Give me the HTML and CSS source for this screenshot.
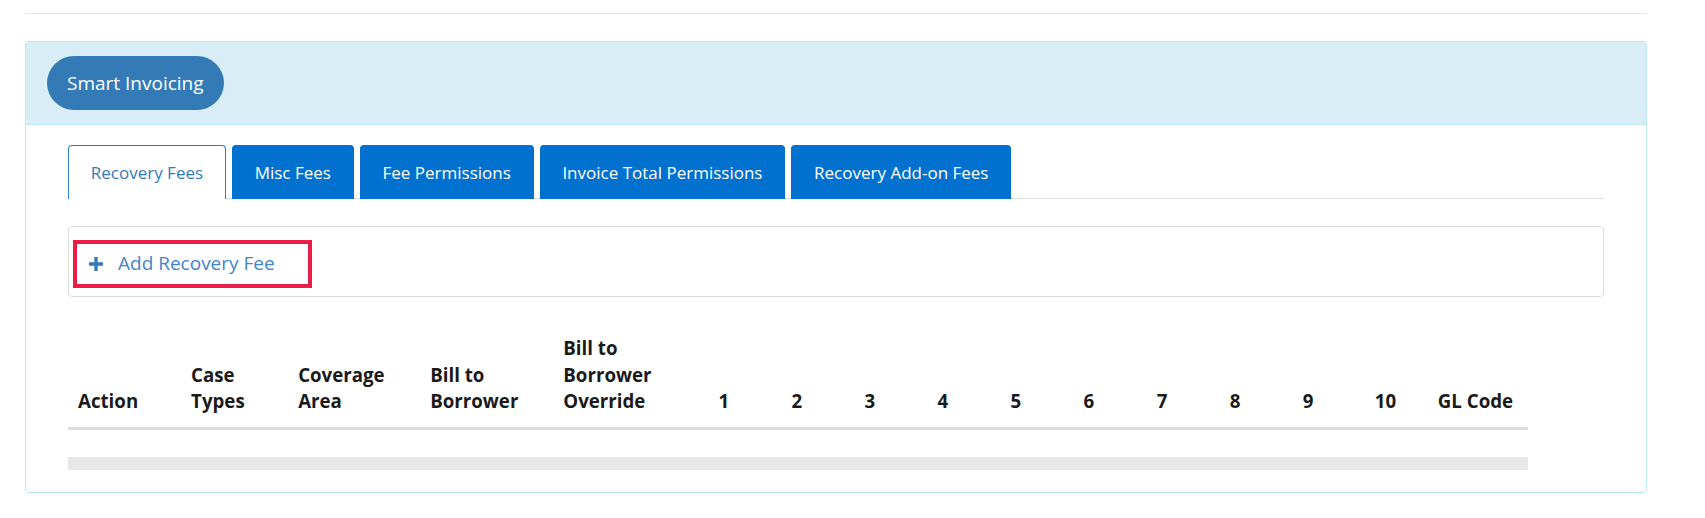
FILE: index.html
```html
<!DOCTYPE html>
<html lang="en">
<head>
<meta charset="utf-8">
<title>Smart Invoicing</title>
<link rel="stylesheet" href="styles.css">
</head>
<body>
<div class="page">
  <hr class="top-rule">
  <section class="panel">
    <div class="panel-heading">
      <button class="pill" type="button">Smart Invoicing</button>
    </div>
    <div class="panel-body">
      <ul class="tabs">
        <li class="tab active">Recovery Fees</li>
        <li class="tab">Misc Fees</li>
        <li class="tab">Fee Permissions</li>
        <li class="tab">Invoice Total Permissions</li>
        <li class="tab">Recovery Add-on Fees</li>
      </ul>
      <div class="well">
        <a class="add-link" href="#">
          <svg class="plus" viewBox="0 0 14 14" width="14" height="14" aria-hidden="true"><path d="M5.3 0h3.4v5.3H14v3.4H8.7V14H5.3V8.7H0V5.3h5.3z" fill="#337ab7"/></svg>
          <span>Add Recovery Fee</span>
        </a>
      </div>
      <table class="fees">
        <colgroup>
          <col class="c-action"><col class="c-case"><col class="c-cov"><col class="c-bill"><col class="c-over">
          <col class="c-num"><col class="c-num"><col class="c-num"><col class="c-num"><col class="c-num">
          <col class="c-num"><col class="c-num"><col class="c-num"><col class="c-num9"><col class="c-num10"><col class="c-gl">
        </colgroup>
        <thead>
          <tr>
            <th>Action</th>
            <th>Case<br>Types</th>
            <th>Coverage<br>Area</th>
            <th>Bill to<br>Borrower</th>
            <th>Bill to<br>Borrower<br>Override</th>
            <th>1</th><th>2</th><th>3</th><th>4</th><th>5</th>
            <th>6</th><th>7</th><th>8</th><th>9</th><th>10</th>
            <th>GL Code</th>
          </tr>
        </thead>
        <tbody>
          <tr class="spacer"><td colspan="16"></td></tr>
          <tr class="stripe"><td colspan="16"></td></tr>
        </tbody>
      </table>
    </div>
  </section>
</div>
</body>
</html>
```
FILE: styles.css
```css
* { box-sizing: border-box; }

body {
  margin: 0;
  background: #ffffff;
  font-family: "Open Sans", "Noto Sans", sans-serif;
  color: #222;
}

.page {
  width: 1622px;
  margin-left: 25px;
  padding-top: 13px;
}

.top-rule {
  margin: 0 0 27px 0;
  border: 0;
  border-top: 1px solid #e5e5e5;
  height: 0;
}

.panel {
  border: 1px solid #bce8f1;
  border-radius: 4px;
  background: #fff;
}

.panel-heading {
  background: #d9edf7;
  border-bottom: 1px solid #bce8f1;
  border-radius: 3px 3px 0 0;
  padding: 14px 21px 14px;
}

.pill {
  display: block;
  height: 54px;
  padding: 0 20px;
  border: 0;
  border-radius: 27px;
  background: #337ab7;
  color: #fff;
  font-family: "Open Sans", "Noto Sans", sans-serif;
  font-size: 19px;
  font-weight: 400;
  cursor: pointer;
}

.panel-body {
  padding: 20px 42px 22px 42px;
}

.tabs {
  list-style: none;
  margin: 0;
  padding: 0;
  display: flex;
  gap: 6px;
  height: 54px;
  border-bottom: 1px solid #ddd;
}

.tab {
  height: 54px;
  margin-bottom: -1px;
  padding: 0 21.8px;
  display: flex;
  align-items: center;
  background: #0071ce;
  color: #fff;
  font-size: 17px;
  border: 1px solid #0071ce;
  border-bottom: 0;
  border-radius: 4px 4px 0 0;
  white-space: nowrap;
}

.tab.active {
  background: #fff;
  color: #337ab7;
  border-color: #2a7fd0;
}

.well {
  margin-top: 27px;
  height: 71px;
  border: 1px solid #dcdcdc;
  border-radius: 4px;
  padding: 13px 4px;
}

.add-link {
  display: inline-flex;
  align-items: center;
  width: 239px;
  height: 48px;
  border: 4px solid #ec1b48;
  padding: 0 0 3px 12px;
  gap: 15px;
  color: #4384c6;
  text-decoration: none;
  font-size: 19px;
}

.plus {
  display: block;
  flex: none;
  width: 14px;
  height: 14px;
  margin-top: 2px;
}

.fees {
  margin-top: 30px;
  width: 1460px;
  border-collapse: collapse;
  table-layout: fixed;
}

.c-action { width: 113px; }
.c-case { width: 107px; }
.c-cov { width: 132px; }
.c-bill { width: 133px; }
.c-over { width: 155px; }
.c-num { width: 73px; }
.c-num9 { width: 72px; }
.c-num10 { width: 63px; }
.c-gl { width: 100px; }

.fees th {
  text-align: left;
  vertical-align: bottom;
  font-size: 18.7px;
  font-weight: 700;
  line-height: 26.5px;
  color: #1a1a1a;
  padding: 8px 0 12px 10px;
  border-bottom: 3px solid #dddddd;
  white-space: nowrap;
}

.fees .spacer td {
  height: 29px;
  padding: 0;
}

.fees .stripe td {
  height: 13px;
  padding: 0;
  background: #e7e7e7;
}
```
